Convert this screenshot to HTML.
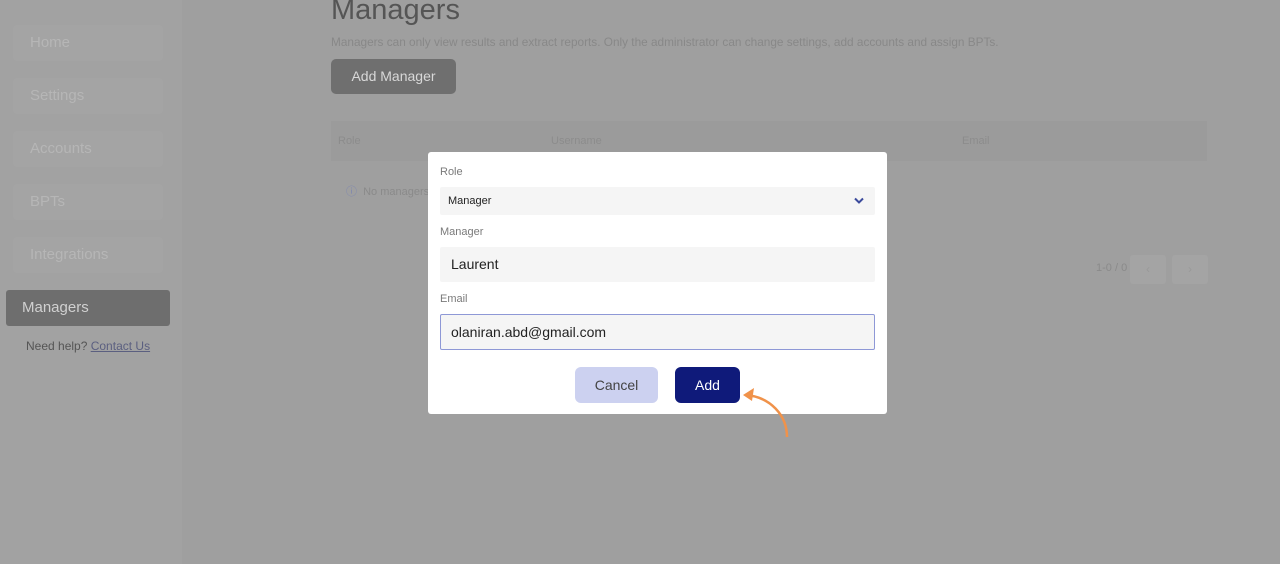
<!DOCTYPE html>
<html><head><style>
*{box-sizing:border-box;margin:0;padding:0}
body{width:1280px;height:564px;overflow:hidden;background:#9f9f9f;font-family:"Liberation Sans",sans-serif;position:relative}
.side{position:absolute;left:0;top:0;width:182px;height:564px;background:#a2a2a2}
.nav{position:absolute;left:13px;width:150px;height:36px;background:#a4a4a4;border-radius:4px;color:#b6b6b6;font-size:15px;padding-left:17px;line-height:36px}
.act{position:absolute;left:6px;top:290px;width:164px;height:36px;background:#6e6e6e;border-radius:3px;color:#d0d0d0;font-size:15px;padding-left:16px;line-height:36px}
.help{position:absolute;left:26px;top:339px;font-size:12px;color:#555}
.help u{color:#5b5f80}
h1{position:absolute;left:331px;top:-6px;font-size:29px;font-weight:normal;color:#555}
.sub{position:absolute;left:331px;top:35px;font-size:11.8px;color:#888}
.addm{position:absolute;left:331px;top:59px;width:125px;height:35px;background:#6f6f6f;border-radius:5px;color:#d8d8d8;font-size:14px;text-align:center;line-height:35px}
.th{position:absolute;left:331px;top:121px;width:876px;height:40px;background:#9b9b9b;font-size:11px;color:#8c8c8c}
.th span{position:absolute;top:14px}
.none{position:absolute;left:346px;top:183px;font-size:11px;color:#8a8a8a}
.pg{position:absolute;left:1096px;top:262px;font-size:11px;color:#8a8a8a}
.pb{position:absolute;top:255px;width:36px;height:29px;background:#a4a4a4;border-radius:3px;color:#999;text-align:center;line-height:29px;font-size:12px}
.modal{position:absolute;left:428px;top:152px;width:459px;height:262px;background:#fff;border-radius:3px}
.lbl{position:absolute;left:12px;font-size:11px;color:#7a7a7a}
.fld{position:absolute;left:12px;width:435px;background:#f5f5f5;border-radius:2px;color:#222}
.btn{position:absolute;top:215px;height:36px;border-radius:6px;font-size:14px;text-align:center;line-height:36px}
</style></head><body>
<div class="side">
<div class="nav" style="top:25px">Home</div>
<div class="nav" style="top:78px">Settings</div>
<div class="nav" style="top:131px">Accounts</div>
<div class="nav" style="top:184px">BPTs</div>
<div class="nav" style="top:237px">Integrations</div>
<div class="act">Managers</div>
<div class="help">Need help? <u>Contact Us</u></div>
</div>
<h1>Managers</h1>
<div class="sub">Managers can only view results and extract reports. Only the administrator can change settings, add accounts and assign BPTs.</div>
<div class="addm">Add Manager</div>
<div class="th"><span style="left:7px">Role</span><span style="left:220px">Username</span><span style="left:631px">Email</span></div>
<div class="none"><span style="color:#7e86b0">ⓘ</span>&nbsp;&nbsp;No managers</div>
<div class="pg">1-0 / 0</div>
<div class="pb" style="left:1130px">‹</div>
<div class="pb" style="left:1172px">›</div>
<div class="modal">
<div class="lbl" style="top:14px">Role</div>
<div class="fld" style="top:35px;height:28px;font-size:11px;line-height:28px;padding-left:8px">Manager
<svg style="position:absolute;right:11px;top:10px" width="10" height="7" viewBox="0 0 10 7"><path d="M1 1.5L5 5.5L9 1.5" stroke="#3b4a9c" stroke-width="2" fill="none"/></svg></div>
<div class="lbl" style="top:74px">Manager</div>
<div class="fld" style="top:95px;height:35px;font-size:14px;line-height:35px;padding-left:11px">Laurent</div>
<div class="lbl" style="top:141px">Email</div>
<div class="fld" style="top:162px;height:36px;font-size:14px;line-height:34px;padding-left:10px;border:1.5px solid #8e98d6">olaniran.abd@gmail.com</div>
<div class="btn" style="left:147px;width:83px;background:#ccd1f0;color:#444">Cancel</div>
<div class="btn" style="left:247px;width:65px;background:#0f1a7a;color:#fff">Add</div>
</div>
<svg style="position:absolute;left:740px;top:385px" width="60" height="55" viewBox="0 0 60 55"><path d="M47 52C47 30 30 12 6 10" stroke="#f0924a" stroke-width="2.5" fill="none"/><path d="M3 10L14 3L12 16Z" fill="#f0924a"/></svg>
</body></html>
